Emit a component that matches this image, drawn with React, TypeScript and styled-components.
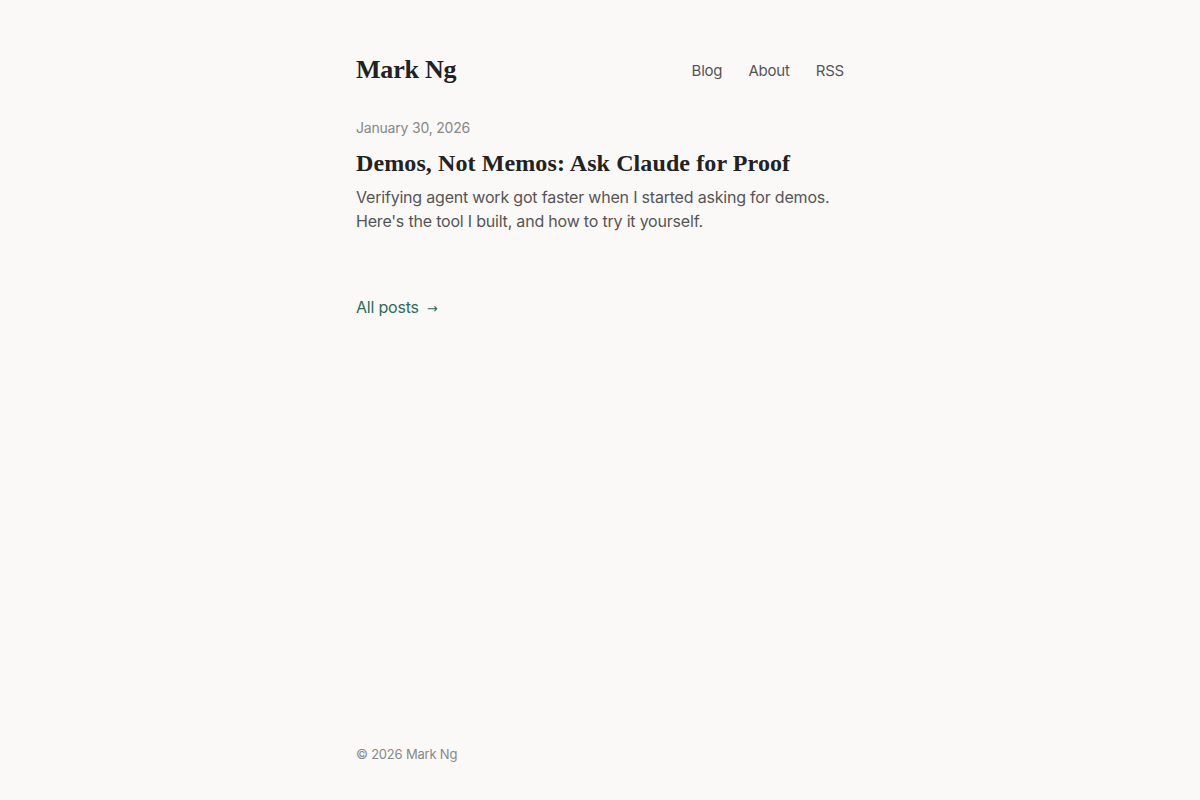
import styled, { createGlobalStyle } from "styled-components";

const GlobalStyle = createGlobalStyle`
  html, body {
    margin: 0;
    padding: 0;
    background: #faf9f7;
  }
  body {
    font-family: "Inter", "Noto Sans", sans-serif;
    letter-spacing: -0.2px;
    color: #222;
  }
`;

const Page = styled.div`
  min-height: 100vh;
  display: flex;
  flex-direction: column;
  align-items: center;
`;

const Column = styled.div`
  width: 488px;
  flex: 1;
  display: flex;
  flex-direction: column;
`;

const Header = styled.header`
  display: flex;
  align-items: center;
  justify-content: space-between;
  padding-top: 53px;
`;

const SiteTitle = styled.a`
  font-family: "Liberation Serif", "DejaVu Serif", serif;
  font-weight: 700;
  font-size: 26px;
  line-height: 34px;
  letter-spacing: -0.2px;
  color: #222;
  text-decoration: none;
`;

const Nav = styled.nav`
  display: flex;
  gap: 26px;
`;

const NavLink = styled.a`
  font-size: 15px;
  color: #555;
  text-decoration: none;
`;

const Main = styled.main`
  flex: 1;
  padding-top: 31px;
`;

const Post = styled.article`
  display: flex;
  flex-direction: column;
`;

const PostDate = styled.time`
  font-size: 14px;
  line-height: 20px;
  color: #888;
`;

const PostTitle = styled.h2`
  font-family: "Liberation Serif", "DejaVu Serif", serif;
  font-weight: 700;
  font-size: 24px;
  line-height: 30px;
  letter-spacing: 0.1px;
  margin: 10px 0 7px;
  color: #222;
`;

const Excerpt = styled.p`
  font-size: 16px;
  line-height: 24px;
  color: #555;
  margin: 0;
`;

const AllPosts = styled.a`
  display: inline-flex;
  align-items: baseline;
  gap: 8px;
  margin-top: 62px;
  font-size: 16px;
  line-height: 24px;
  color: #2e6b5e;
  text-decoration: none;
`;

const Arrow = styled.span`
  font-family: "DejaVu Sans", sans-serif;
  font-size: 13px;
`;

const Footer = styled.footer`
  padding: 0 0 36px;
  font-size: 13px;
  line-height: 20px;
  color: #888;
`;

export default function App() {
  return (
    <>
      <GlobalStyle />
      <Page>
        <Column>
          <Header>
            <SiteTitle href="#">Mark Ng</SiteTitle>
            <Nav>
              <NavLink href="#">Blog</NavLink>
              <NavLink href="#">About</NavLink>
              <NavLink href="#">RSS</NavLink>
            </Nav>
          </Header>
          <Main>
            <Post>
              <PostDate>January 30, 2026</PostDate>
              <PostTitle>Demos, Not Memos: Ask Claude for Proof</PostTitle>
              <Excerpt>
                Verifying agent work got faster when I started asking for demos.
                Here's the tool I built, and how to try it yourself.
              </Excerpt>
            </Post>
            <AllPosts href="#">
              All posts<Arrow>→</Arrow>
            </AllPosts>
          </Main>
          <Footer>© 2026 Mark Ng</Footer>
        </Column>
      </Page>
    </>
  );
}
